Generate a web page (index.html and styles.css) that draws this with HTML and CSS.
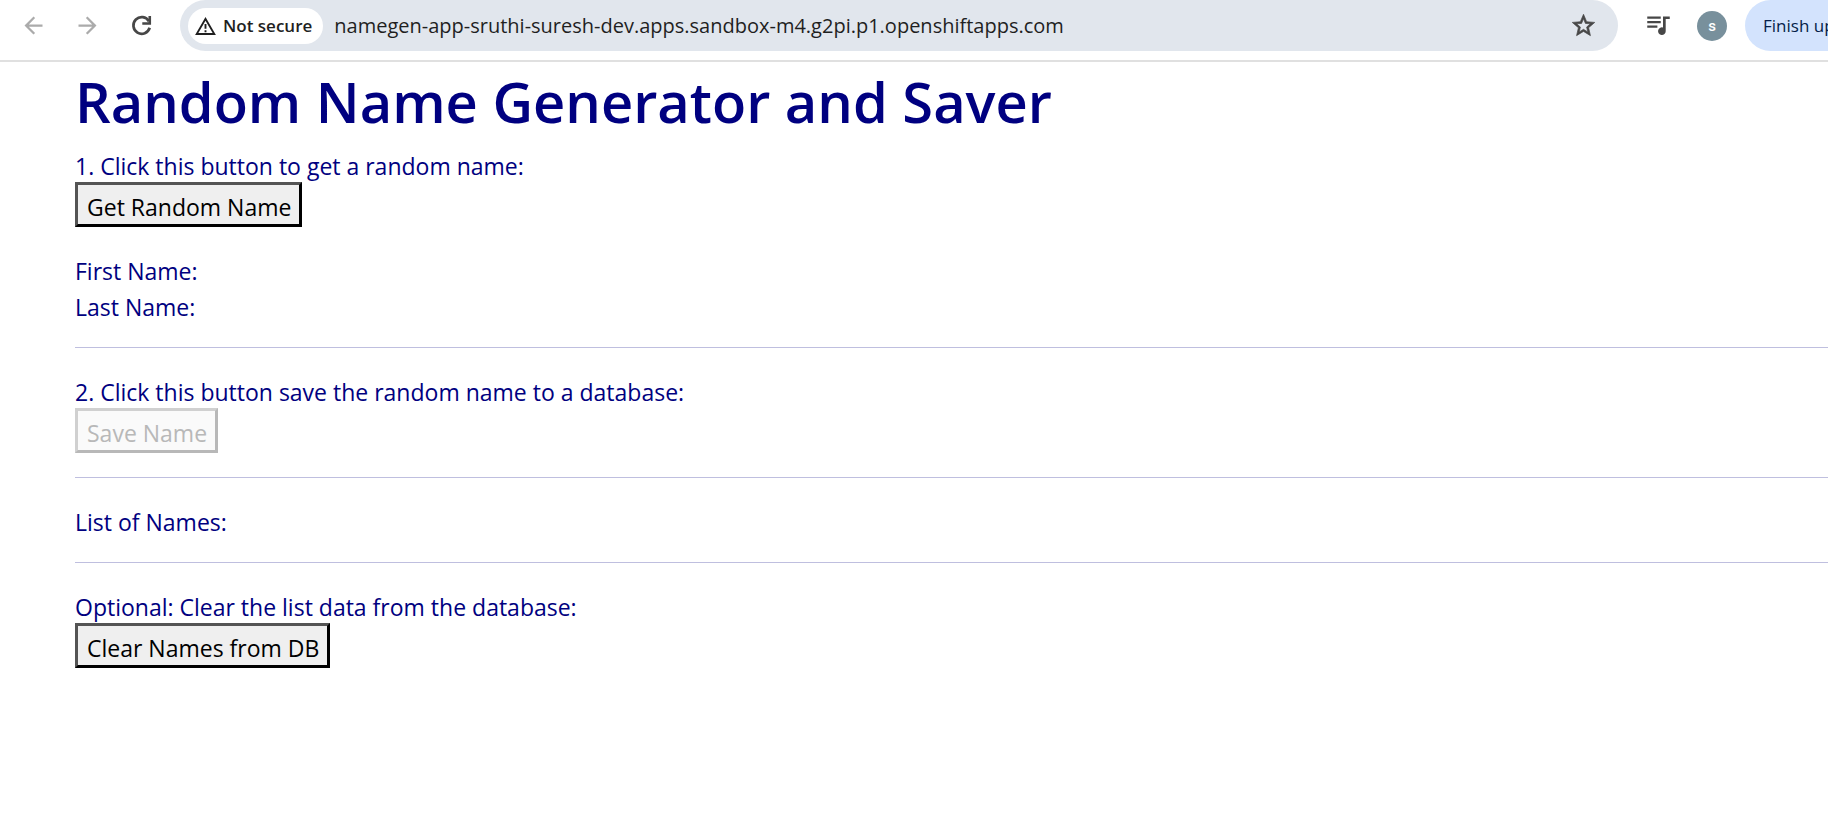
FILE: index.html
```
<!DOCTYPE html>
<html lang="en">
<head>
<meta charset="utf-8">
<title>Random Name Generator and Saver</title>
<link rel="stylesheet" href="styles.css">
</head>
<body>
<header class="toolbar">
  <nav class="nav">
    <button class="icon-btn dim" type="button" aria-label="Back"><svg class="icon" viewBox="0 0 24 24"><path d="M20 11H7.83l5.59-5.59L12 4l-8 8 8 8 1.41-1.41L7.83 13H20z"/></svg></button>
    <button class="icon-btn dim" type="button" aria-label="Forward"><svg class="icon" viewBox="0 0 24 24"><path d="M4 11h12.17l-5.59-5.59L12 4l8 8-8 8-1.41-1.41L16.17 13H4z"/></svg></button>
    <button class="icon-btn" type="button" aria-label="Reload"><svg class="icon" viewBox="0 0 24 24"><path d="M18.6 8.2A7.4 7.4 0 1 0 19.3 14" fill="none" stroke="currentColor" stroke-width="2.4"/><path d="M20.5 3.5v7.8h-7.8V9.1h5.5V3.5z"/></svg></button>
  </nav>
  <div class="omnibox">
    <button class="chip" type="button"><svg class="warn" viewBox="1 2 22 19"><path d="M12 5.990 19.530 19H4.470L12 5.990M12 2 1 21h22zM11 9.500h2v5h-2zM11 16h2v2h-2z"/></svg>Not secure</button>
    <input class="url" type="text" aria-label="Address" value="namegen-app-sruthi-suresh-dev.apps.sandbox-m4.g2pi.p1.openshiftapps.com">
    <button class="icon-btn" type="button" aria-label="Bookmark this page"><svg class="icon" viewBox="0 0 24 24"><path stroke="currentColor" stroke-width=".6" d="m22 9.240-7.190-.620L12 2 9.190 8.630 2 9.240l5.460 4.730L5.820 21 12 17.270 18.180 21l-1.630-7.030zM12 15.400l-3.760 2.270 1-4.280-3.320-2.880 4.380-.380L12 6.100l1.710 4.040 4.380.380-3.320 2.880 1 4.280z"/></svg></button>
  </div>
  <button class="icon-btn media" type="button" aria-label="Media controls"><svg class="icon" viewBox="0 0 24 24"><path d="M2 4h12v2H2zM2 8h12v2H2zM2 12h9v2H2zM16 4h6v2.200h-3.600V17a3.400 3.400 0 1 1-2.400-3.200z"/></svg></button>
  <button class="avatar" type="button" aria-label="Profile">s</button>
  <button class="update" type="button">Finish update</button>
</header>
<main class="page">
  <h1>Random Name Generator and Saver</h1>
  <section>
    <p>1. Click this button to get a random name:</p>
    <button class="action" type="button">Get Random Name</button>
    <div class="result">
      <p>First Name:</p>
      <p>Last Name:</p>
    </div>
  </section>
  <hr>
  <section>
    <p>2. Click this button save the random name to a database:</p>
    <button class="action" type="button" disabled>Save Name</button>
  </section>
  <hr>
  <section>
    <p>List of Names:</p>
  </section>
  <hr>
  <section>
    <p>Optional: Clear the list data from the database:</p>
    <button class="action" type="button">Clear Names from DB</button>
  </section>
</main>
</body>
</html>
```
FILE: styles.css
```
* { box-sizing: border-box; }

body {
  margin: 0;
  background: #fff;
  color: #000080;
  font: 23px/32px "Open Sans", "Noto Sans", sans-serif;
  overflow-x: hidden;
}

button, input { font: inherit; }

/* Browser toolbar */
.toolbar {
  display: flex;
  align-items: flex-start;
  border-bottom: 2px solid #e0e0e0;
  padding-bottom: 9px;
  padding-left: 6px;
  overflow: hidden;
}

.nav { display: flex; }

.icon-btn {
  display: flex;
  flex: none;
  align-items: center;
  justify-content: center;
  width: 54px;
  height: 51px;
  padding: 0;
  border: 0;
  background: none;
  color: #474747;
}

.icon-btn.dim { color: #ababab; }

.icon { width: 27px; height: 27px; fill: currentColor; }

.omnibox {
  display: flex;
  flex: 1;
  align-items: center;
  min-width: 0;
  height: 51px;
  margin-left: 12px;
  padding: 0 8px;
  border-radius: 26px;
  background: #e1e6ed;
}

.chip {
  display: flex;
  flex: none;
  align-items: center;
  gap: 7px;
  height: 36px;
  padding: 0 11px 0 7px;
  border: 0;
  border-radius: 18px;
  background: #fff;
  color: #1f1f1f;
  font-size: 17px;
  font-weight: 600;
  line-height: 36px;
}

.warn { width: 21px; height: 18px; fill: currentColor; }

.url {
  flex: 1;
  min-width: 0;
  padding: 0;
  margin-left: 11px;
  border: 0;
  outline: 0;
  background: none;
  color: #1f1f1f;
  font-size: 20px;
  line-height: 36px;
}

.media { margin-left: 13px; }

.avatar {
  flex: none;
  width: 30px;
  height: 30px;
  margin: 11px 18px 0 12px;
  padding: 0;
  border: 0;
  border-radius: 50%;
  background: #78909c;
  color: #fff;
  font: 500 15px/28px Roboto, sans-serif;
}

.update {
  flex: none;
  height: 51px;
  width: 160px;
  margin-right: -77px;
  padding: 0 18px;
  border: 0;
  border-radius: 26px;
  background: #d3e3fd;
  color: #041e49;
  font-size: 17px;
  text-align: left;
  white-space: nowrap;
}

/* Page content */
.page { padding-left: 75px; }

h1 {
  margin: 0 0 10px;
  padding-top: 4px;
  font-size: 56px;
  font-weight: 600;
  line-height: 70px;
}

p {
  margin: 0;
  padding-top: 4px;
}

hr {
  margin: 24px 0;
  border: 0;
  border-top: 1px solid #bfbfdf;
}

.action {
  display: block;
  padding: 6px 8px 1px 9px;
  border: 3px outset #000;
  border-radius: 0;
  background: #efefef;
  color: #000;
}

.action:disabled {
  border-color: #d0d0d0 #b8b8b8 #b8b8b8 #d0d0d0;
  border-style: solid;
  background: #fafafa;
  color: #b8b8b8;
}

.result { margin-top: 24px; }
```
